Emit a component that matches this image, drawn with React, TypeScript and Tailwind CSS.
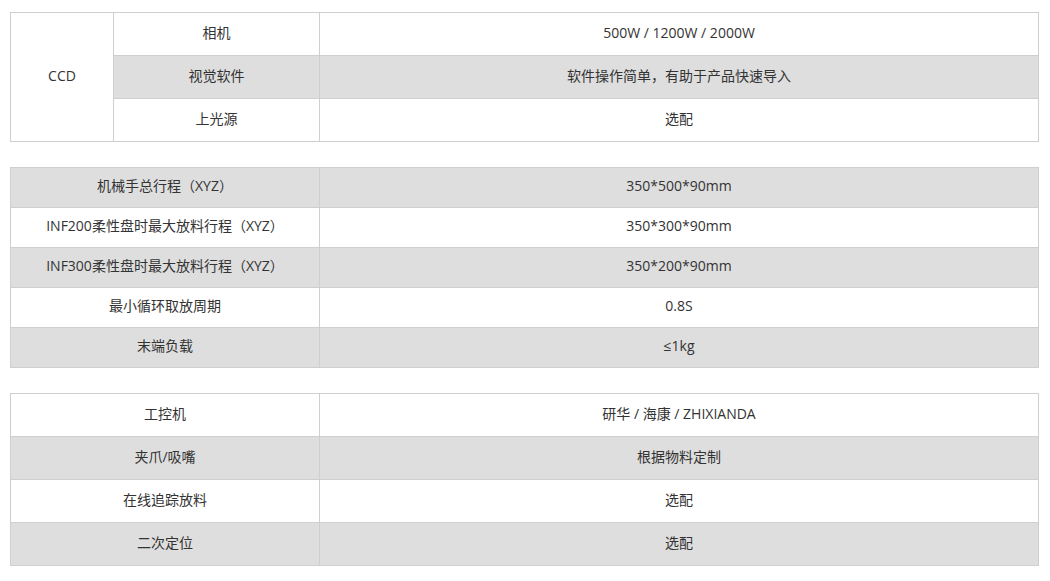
const font = { fontFamily: '"Open Sans", "Noto Sans CJK SC", sans-serif' };

type Row = { label: string; value: string; gray: boolean };

const ccdRows: Row[] = [
  { label: "相机", value: "500W / 1200W / 2000W", gray: false },
  { label: "视觉软件", value: "软件操作简单，有助于产品快速导入", gray: true },
  { label: "上光源", value: "选配", gray: false },
];

const robotRows: Row[] = [
  { label: "机械手总行程（XYZ）", value: "350*500*90mm", gray: true },
  { label: "INF200柔性盘时最大放料行程（XYZ）", value: "350*300*90mm", gray: false },
  { label: "INF300柔性盘时最大放料行程（XYZ）", value: "350*200*90mm", gray: true },
  { label: "最小循环取放周期", value: "0.8S", gray: false },
  { label: "末端负载", value: "≤1kg", gray: true },
];

const otherRows: Row[] = [
  { label: "工控机", value: "研华 / 海康 / ZHIXIANDA", gray: false },
  { label: "夹爪/吸嘴", value: "根据物料定制", gray: true },
  { label: "在线追踪放料", value: "选配", gray: false },
  { label: "二次定位", value: "选配", gray: true },
];

const cell = "border border-[#cfcfcf] p-0 pb-[3px] text-center align-middle leading-[20px]";

function SpecTable({ rows, rowH }: { rows: Row[]; rowH: string }) {
  return (
    <table className="w-full table-fixed border-collapse text-[14px] text-[#333]">
      <colgroup>
        <col className="w-[309px]" />
        <col />
      </colgroup>
      <tbody>
        {rows.map((r) => (
          <tr key={r.label} className={`${rowH} ${r.gray ? "bg-[#dedede]" : "bg-white"}`}>
            <td className={cell}>{r.label}</td>
            <td className={cell}>{r.value}</td>
          </tr>
        ))}
      </tbody>
    </table>
  );
}

export default function App() {
  return (
    <div className="min-h-[581px] bg-white px-[10px] pt-[12px]" style={font}>
      <div className="flex flex-col gap-[25px] pr-[1px]">
        <table className="w-full table-fixed border-collapse text-[14px] text-[#333]">
          <colgroup>
            <col className="w-[103px]" />
            <col className="w-[206px]" />
            <col />
          </colgroup>
          <tbody>
            {ccdRows.map((r, i) => (
              <tr key={r.label} className={`h-[43px] ${r.gray ? "bg-[#dedede]" : "bg-white"}`}>
                {i === 0 && (
                  <td rowSpan={3} className={`${cell} bg-white`}>
                    CCD
                  </td>
                )}
                <td className={cell}>{r.label}</td>
                <td className={cell}>{r.value}</td>
              </tr>
            ))}
          </tbody>
        </table>

        <SpecTable rows={robotRows} rowH="h-[40px]" />
        <SpecTable rows={otherRows} rowH="h-[43px]" />
      </div>
    </div>
  );
}
